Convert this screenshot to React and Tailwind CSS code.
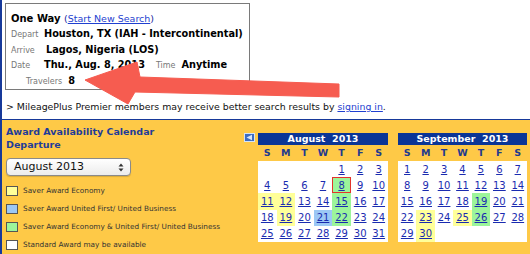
const aug = {
  start: 4,
  days: 31,
  marks: { 8: "sel", 11: "y", 12: "y", 15: "g", 19: "y", 21: "b", 22: "g" },
};
const sep = {
  start: 0,
  days: 30,
  marks: { 19: "g", 23: "y", 25: "y", 26: "g", 30: "y" },
};

const cellBg = {
  y: "bg-[#ffff99]",
  g: "bg-[#9cf59a]",
  b: "bg-[#9cc8f5]",
  sel: "bg-[#9cf59a] border border-[#e3342b]",
};

const Month = ({ title, data, className }) => {
  const cells = [];
  for (let i = 0; i < 35; i++) {
    const d = i - data.start + 1;
    cells.push(d >= 1 && d <= data.days ? d : null);
  }
  return (
    <div className={className}>
      <div className="h-[12px] bg-[#0b3596] text-center text-white font-bold text-[9.5px] leading-[12px] whitespace-pre">
        {title}
      </div>
      <div className="grid grid-cols-7 h-[16px] items-center text-center text-[9.5px] font-bold text-[#1f3a8f]">
        {["S", "M", "T", "W", "T", "F", "S"].map((n, i) => (
          <span key={i}>{n}</span>
        ))}
      </div>
      <div className="grid grid-cols-7 bg-white">
        {cells.map((d, i) => (
          <div
            key={i}
            className={`h-[16.2px] flex items-center justify-center text-[10px] text-[#1a2bb0] ${
              d && data.marks[d] ? cellBg[data.marks[d]] : ""
            }`}
          >
            {d && <span className="underline">{d}</span>}
          </div>
        ))}
      </div>
    </div>
  );
};

const Legend = ({ color, label }) => (
  <div className="h-[18px] flex items-center gap-[5px]">
    <span className={`w-[12px] h-[10px] border border-[#555] ${color}`} />
    <span className="text-[7.3px] text-[#333]">{label}</span>
  </div>
);

export default function App() {
  return (
    <div className="relative w-[530px] h-[254px] overflow-hidden bg-white border-l-2 border-[#17399a] font-['DejaVu_Sans',sans-serif] text-black">
      <div className="ml-[3px] mt-[3px] w-[245px] h-[87px] border border-[#7a7a7a] pl-[5px] pt-[4.5px] whitespace-nowrap">
        <div className="leading-[15.5px] h-[15.5px]">
          <span className="font-bold text-[10px]">One Way </span>
          <span className="text-[9.5px] text-[#1a2aa0]">
            (<span className="underline text-[#1f3fd0]">Start New Search</span>)
          </span>
        </div>
        <div className="leading-[15.5px] h-[15.5px]">
          <span className="inline-block w-[33px] text-[8px] text-[#777]">Depart</span>
          <span className="font-bold text-[9.75px]">Houston, TX (IAH - Intercontinental)</span>
        </div>
        <div className="leading-[15.5px] h-[15.5px]">
          <span className="inline-block w-[35px] text-[8px] text-[#777]">Arrive</span>
          <span className="font-bold text-[9.75px]">Lagos, Nigeria (LOS)</span>
        </div>
        <div className="leading-[15.5px] h-[15.5px]">
          <span className="inline-block w-[33px] text-[8px] text-[#777]">Date</span>
          <span className="font-bold text-[9.75px]">Thu., Aug. 8, 2013</span>
          <span className="ml-[11px] text-[8px] text-[#777]">Time</span>
          <span className="ml-[6px] font-bold text-[9.75px]">Anytime</span>
        </div>
        <div className="leading-[15.5px] h-[15.5px] pl-[15px]">
          <span className="text-[8px] text-[#777]">Travelers</span>
          <span className="ml-[6px] font-bold text-[9.75px]">8</span>
        </div>
      </div>

      <div className="h-[29px] pt-[11px] pl-[4px] text-[9.4px] leading-[12px] text-[#111] whitespace-nowrap">
        &gt; MileagePlus Premier members may receive better search results by{" "}
        <span className="underline text-[#1f3fd0]">signing in</span>.
      </div>

      <div className="h-[135px] border-t border-[#17399a] bg-[#fec947] flex items-start">
        <div className="w-[242px] pl-[4px] pt-[4.5px]">
          <div className="text-[9.5px] font-bold leading-[13px] text-[#1f3c99]">
            Award Availability Calendar
            <br />
            Departure
          </div>
          <div className="mt-[7.5px] w-[125px] h-[18px] rounded-[4px] border border-[#8a8a8a] bg-gradient-to-b from-white to-[#ececec] shadow-[0_1px_1px_rgba(0,0,0,0.15)] flex items-center justify-between pl-[7px] pr-[6px]">
            <span className="text-[11px] leading-[16px] text-[#111]">August 2013</span>
            <svg width="6" height="9" viewBox="0 0 6 9">
              <polygon points="3,0.5 5.5,3.5 0.5,3.5" fill="#333" />
              <polygon points="0.5,5.5 5.5,5.5 3,8.5" fill="#333" />
            </svg>
          </div>
          <div className="mt-[6px]">
            <Legend color="bg-[#ffff99]" label="Saver Award Economy" />
            <Legend color="bg-[#9cc8f5]" label="Saver Award United First/ United Business" />
            <Legend color="bg-[#9cf59a]" label="Saver Award Economy & United First/ United Business" />
            <Legend color="bg-white" label="Standard Award may be available" />
          </div>
        </div>

        <svg className="mt-[13px]" width="11" height="9" viewBox="0 0 11 9">
          <rect x="0.5" y="0.5" width="10" height="8" fill="#3c6cc2" stroke="#d4e3f7" />
          <polygon points="2.5,4.5 8,1.8 8,7.2" fill="#d8e6f8" />
        </svg>

        <Month title={"August  2013"} data={aug} className="ml-[3px] mt-[13px] w-[130px]" />
        <Month title={"September  2013"} data={sep} className="ml-[10px] mt-[13px] w-[129px]" />
      </div>

      <svg
        className="absolute left-0 top-0 pointer-events-none"
        width="530"
        height="254"
        viewBox="0 0 530 254"
      >
        <polygon
          points="83,80 135,62 138,77 337,84 337,97 133,92 126,104"
          fill="#f65c50"
          stroke="#f65c50"
          strokeWidth="1"
          strokeLinejoin="round"
        />
      </svg>
    </div>
  );
}
